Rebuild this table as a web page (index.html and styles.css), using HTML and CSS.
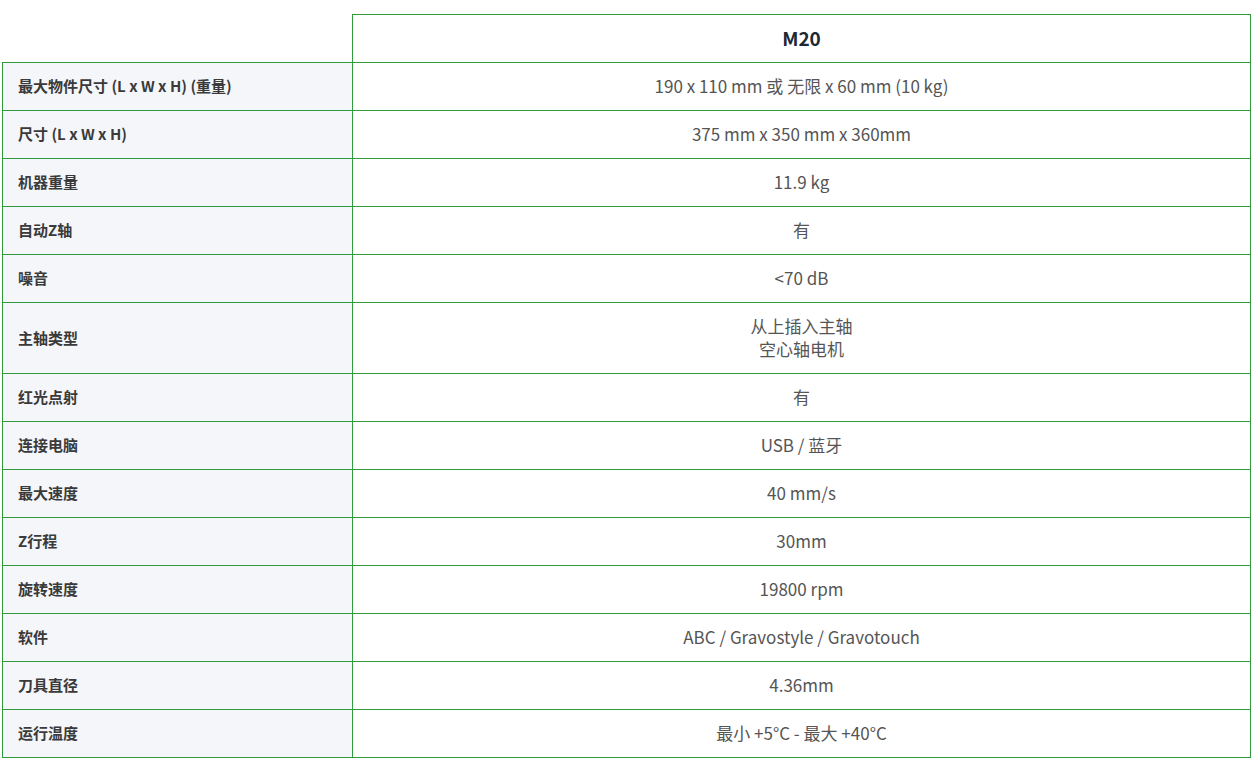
FILE: index.html
```html
<!DOCTYPE html>
<html lang="zh">
<head>
<meta charset="utf-8">
<title>M20</title>
<link rel="stylesheet" href="styles.css">
</head>
<body>
<table class="spec">
  <colgroup>
    <col class="col-label">
    <col class="col-value">
  </colgroup>
  <thead>
    <tr>
      <th class="corner"></th>
      <th class="model">M20</th>
    </tr>
  </thead>
  <tbody>
    <tr><th class="label">最大物件尺寸 (L x W x H) (重量)</th><td class="value">190 x 110 mm 或 无限 x 60 mm (10 kg)</td></tr>
    <tr><th class="label">尺寸 (L x W x H)</th><td class="value">375 mm x 350 mm x 360mm</td></tr>
    <tr><th class="label">机器重量</th><td class="value">11.9 kg</td></tr>
    <tr><th class="label">自动Z轴</th><td class="value">有</td></tr>
    <tr><th class="label">噪音</th><td class="value">&lt;70 dB</td></tr>
    <tr><th class="label">主轴类型</th><td class="value">从上插入主轴<br>空心轴电机</td></tr>
    <tr><th class="label">红光点射</th><td class="value">有</td></tr>
    <tr><th class="label">连接电脑</th><td class="value">USB / 蓝牙</td></tr>
    <tr><th class="label">最大速度</th><td class="value">40 mm/s</td></tr>
    <tr><th class="label">Z行程</th><td class="value">30mm</td></tr>
    <tr><th class="label">旋转速度</th><td class="value">19800 rpm</td></tr>
    <tr><th class="label">软件</th><td class="value">ABC / Gravostyle / Gravotouch</td></tr>
    <tr><th class="label">刀具直径</th><td class="value">4.36mm</td></tr>
    <tr><th class="label">运行温度</th><td class="value">最小 +5°C - 最大 +40°C</td></tr>
  </tbody>
</table>
</body>
</html>
```

FILE: styles.css
```css
html, body {
  margin: 0;
  padding: 0;
  background: #ffffff;
}

body {
  font-family: "Noto Sans CJK SC", "Noto Sans", sans-serif;
}

.spec {
  border-collapse: collapse;
  margin: 14px 0 0 2px;
  width: 1249px;
  table-layout: fixed;
}

.col-label {
  width: 350px;
}

.spec th,
.spec td {
  border: 1px solid #2f9a3e;
  padding: 11px 15px 13px;
  line-height: 23px;
  vertical-align: middle;
}

.spec .corner {
  border-top: none;
  border-left: none;
  background: #ffffff;
}

.spec .model {
  text-align: center;
  font-size: 19px;
  font-weight: 700;
  color: #1d2935;
}

.spec .label {
  text-align: left;
  font-size: 15px;
  font-weight: 700;
  color: #3a3a3a;
  background: #f5f6f9;
}

.spec .value {
  text-align: center;
  font-size: 17px;
  font-weight: 400;
  color: #555555;
}
```
